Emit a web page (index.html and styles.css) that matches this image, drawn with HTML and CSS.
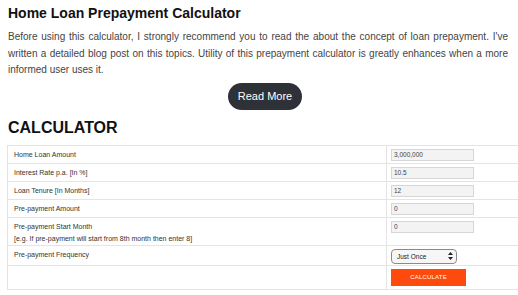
FILE: index.html
```html
<!DOCTYPE html>
<html lang="en">
  <head>
    <meta charset="UTF-8" />
    <meta name="viewport" content="width=device-width, initial-scale=1.0" />
    <title>Home Loan Prepayment Calculator</title>
    <link rel="stylesheet" href="styles.css">
  </head>
  <body>
    <div class="page">
      <h1 class="title">Home Loan Prepayment Calculator</h1>
      <p class="intro">Before using this calculator, I strongly recommend you to read the about the concept of loan prepayment. I've written a detailed blog post on this topics. Utility of this prepayment calculator is greatly enhances when a more informed user uses it.</p>
      <div class="more">
        <a class="more-btn" href="#">Read More</a>
      </div>
      <h2 class="section">CALCULATOR</h2>
      <div class="calc-wrap">
        <table class="calc">
          <tbody>
            <tr>
              <td class="label">Home Loan Amount</td>
              <td class="field"><div class="input">3,000,000</div></td>
            </tr>
            <tr>
              <td class="label">Interest Rate p.a. [In %]</td>
              <td class="field"><div class="input">10.5</div></td>
            </tr>
            <tr>
              <td class="label">Loan Tenure [In Months]</td>
              <td class="field"><div class="input">12</div></td>
            </tr>
            <tr>
              <td class="label">Pre-payment Amount</td>
              <td class="field"><div class="input">0</div></td>
            </tr>
            <tr class="tall">
              <td class="label">Pre-payment Start Month<br>[e.g. If pre-payment will start from 8th month then enter 8]</td>
              <td class="field"><div class="input">0</div></td>
            </tr>
            <tr class="freq">
              <td class="label">Pre-payment Frequency</td>
              <td class="field">
                <div class="select">
                  <span>Just Once</span>
                  <svg width="5" height="8" viewBox="0 0 5 8"><path d="M2.5 0 L5 3 H0 Z M2.5 8 L5 5 H0 Z" fill="#222"/></svg>
                </div>
              </td>
            </tr>
            <tr class="action">
              <td class="label"></td>
              <td class="field"><div class="calc-btn">CALCULATE</div></td>
            </tr>
          </tbody>
        </table>
      </div>
    </div>
  </body>
</html>
```

FILE: styles.css
```css
body {
  margin: 0;
  background: #fff;
  font-family: "Liberation Sans", Arial, sans-serif;
  color: #333;
}
.page {
  padding: 0 8px;
}
.title {
  margin: 5px 0 0;
  font-size: 14px;
  line-height: 17px;
  font-weight: 700;
  color: #111;
}
.intro {
  margin: 7px 0 0;
  width: 500px;
  font-size: 10px;
  line-height: 16.5px;
  text-align: justify;
  color: #444;
}
.more {
  display: flex;
  justify-content: center;
  padding-left: 12px;
  margin-top: 4px;
}
.more-btn {
  display: block;
  width: 74px;
  height: 27px;
  line-height: 27px;
  border-radius: 14px;
  background: #2e3238;
  color: #fff;
  font-size: 11px;
  text-align: center;
  text-decoration: none;
}
.section {
  margin: 9px 0 0;
  font-size: 16px;
  line-height: 18px;
  font-weight: 700;
  color: #111;
}
.calc-wrap {
  margin: 8px -8px 0 -1px;
  overflow: hidden;
}
.calc {
  width: 560px;
  border-collapse: collapse;
  border: 1px solid #e4e4e4;
}
.calc td {
  border-top: 1px solid #e4e4e4;
  border-bottom: 1px solid #e4e4e4;
  vertical-align: top;
}
.calc tr {
  height: 18px;
}
.calc .label {
  width: 366px;
  padding: 4px 6px 0;
  font-size: 7px;
  line-height: 10px;
  color: #333;
  border-right: 1px solid #e4e4e4;
}
.calc .field {
  padding: 3px 5px 0 4px;
}
.calc .tall {
  height: 28px;
}
.calc .tall .label {
  padding-top: 3px;
  line-height: 12px;
}
.calc .freq {
  height: 20px;
}
.calc .action {
  height: 24px;
}
.input {
  width: 77px;
  height: 10px;
  padding: 0 2px;
  border: 1px solid #d6d6d6;
  background: #f3f3f3;
  font-size: 6.5px;
  line-height: 10px;
  color: #444;
}
.select {
  display: flex;
  align-items: center;
  justify-content: space-between;
  width: 56px;
  height: 13px;
  padding: 0 3px 0 5px;
  border: 1px solid #8a8a8a;
  border-radius: 4px;
  background: #f6f6f6;
  font-size: 6.5px;
  color: #222;
}
.calc-btn {
  width: 75px;
  height: 17px;
  line-height: 17px;
  background: #fe4a0c;
  color: #fff;
  font-size: 6px;
  text-align: center;
  letter-spacing: 0.2px;
}
```
